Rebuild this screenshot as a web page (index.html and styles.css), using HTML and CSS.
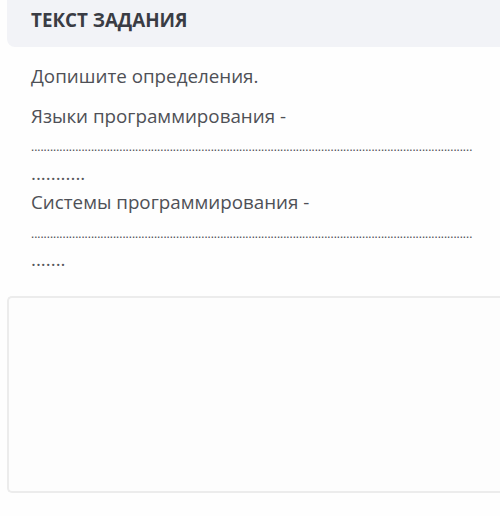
FILE: index.html
```html
<!DOCTYPE html>
<html lang="ru">
<head>
    <meta charset="UTF-8">
    <meta name="viewport" content="width=device-width, initial-scale=1.0">
    <title>Текст задания</title>
    <link rel="stylesheet" href="styles.css">
</head>
<body>
    <div class="task">
        <div class="task-header">
            <h2>ТЕКСТ ЗАДАНИЯ</h2>
        </div>
        <div class="task-body">
            <p>Допишите определения.</p>
            <p>
                Языки программирования -<br>
                <span class="dots dense">............................................................................................................................................</span><br>
                <span class="dots">...........</span><br>
                Системы программирования -<br>
                <span class="dots dense">............................................................................................................................................</span><br>
                <span class="dots">.......</span>
            </p>
        </div>
        <div class="answer"></div>
    </div>
</body>
</html>
```

FILE: styles.css
```css
body {
    margin: 0;
    padding: 0;
    background: #fefefe;
    font-family: 'Open Sans', 'Noto Sans', sans-serif;
    overflow: hidden;
}

.task {
    padding-left: 7px;
}

.task-header {
    background: #f2f3f7;
    border-bottom-left-radius: 8px;
    height: 47px;
    padding: 0 24px;
    display: flex;
    align-items: center;
}

.task-header h2 {
    margin: 0 0 7px;
    font-size: 18.8px;
    font-weight: 700;
    color: #3a3c44;
}

.task-body {
    padding: 15px 24px 0;
    color: #4e5056;
    font-size: 18.8px;
    line-height: 28.7px;
}

.task-body p {
    margin: 0 0 11px;
    white-space: nowrap;
}

.dots {
    color: #55575c;
}

.dots.dense {
    font-size: 12px;
    line-height: 1;
    color: #4a4c52;
}

.answer {
    margin-top: 22px;
    height: 193px;
    border: 2px solid #ececec;
    border-right: none;
    border-radius: 5px 0 0 5px;
    background: #fdfdfd;
}
```
